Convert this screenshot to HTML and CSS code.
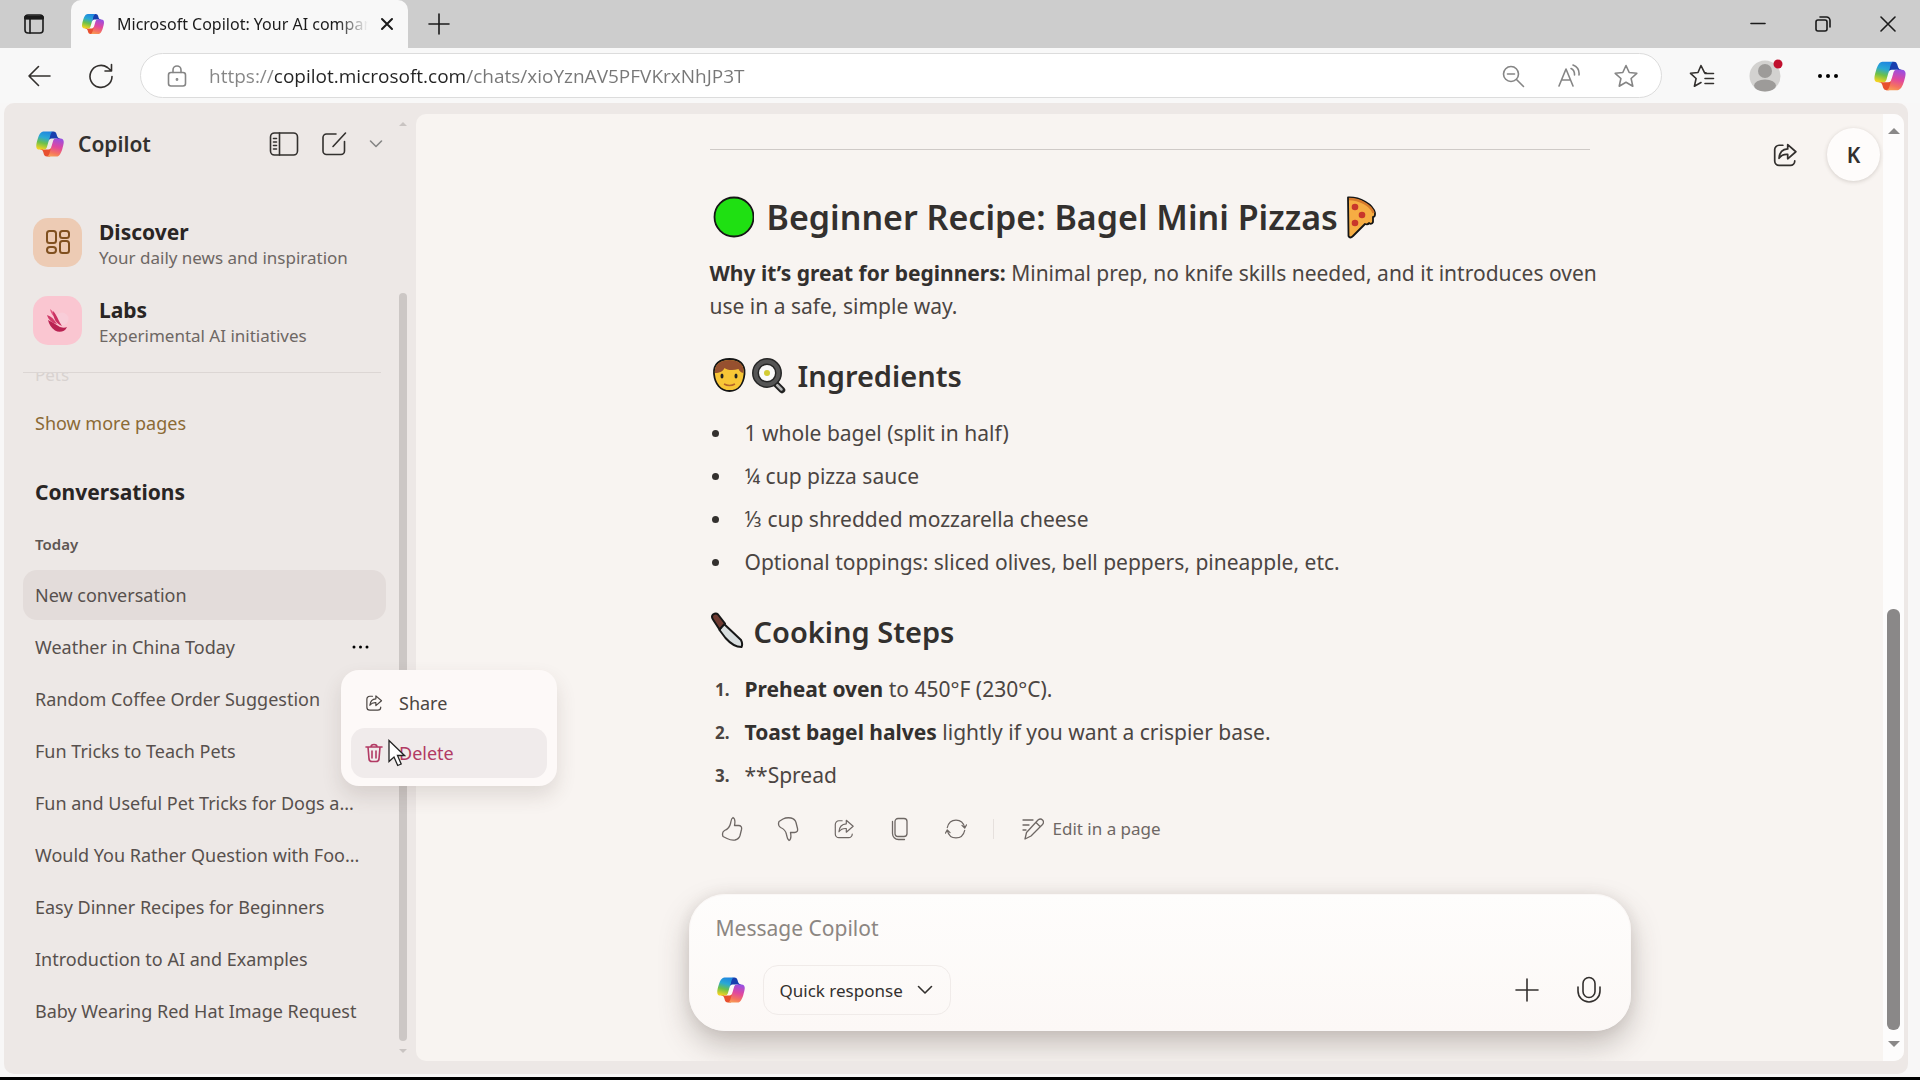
FILE: index.html
```html
<!DOCTYPE html>
<html lang="en">
<head>
<meta charset="utf-8">
<title>Microsoft Copilot: Your AI companion</title>
<link rel="stylesheet" href="styles.css">
</head>
<body>
<svg class="sprite" width="0" height="0" aria-hidden="true">
  <defs>
    <linearGradient id="cool" x1="0.6" y1="0" x2="0.35" y2="1">
      <stop offset="0" stop-color="#1f86e0"/><stop offset=".35" stop-color="#2aa9d4"/><stop offset=".65" stop-color="#6cc04a"/><stop offset="1" stop-color="#f3d321"/>
    </linearGradient>
    <linearGradient id="warm" x1="0.6" y1="0" x2="0.35" y2="1">
      <stop offset="0" stop-color="#9a4fe0"/><stop offset=".45" stop-color="#e0479f"/><stop offset=".8" stop-color="#f5735f"/><stop offset="1" stop-color="#f79a55"/>
    </linearGradient>
  </defs>
  <symbol id="copilot" viewBox="0 0 48 48">
    <path d="M34.142 7.325A4.630 4.630 0 0 0 29.700 4h-1.350a4.630 4.630 0 0 0-4.554 3.794L21.480 20.407l.575-1.965a4.630 4.630 0 0 1 4.444-3.329h7.853l3.294 1.282 3.175-1.282h-.926a4.630 4.630 0 0 1-4.443-3.325z" fill="#173fae"/>
    <path d="M14.330 40.656A4.630 4.630 0 0 0 18.779 44h2.870a4.630 4.630 0 0 0 4.629-4.510l.312-12.163-.654 2.233a4.630 4.630 0 0 1-4.443 3.329h-7.919l-2.823-1.532-3.057 1.532h.912a4.630 4.630 0 0 1 4.447 3.344z" fill="#e8502f"/>
    <path d="M29.500 4H13.460c-4.583 0-7.332 6.057-9.165 12.113C2.123 23.290-.720 32.885 7.503 32.885h6.926a4.630 4.630 0 0 0 4.460-3.358 2078 2078 0 0 1 4.971-17.156c.843-2.843 1.545-5.284 2.623-6.805C27.086 4.713 28.093 4 29.500 4" fill="url(#cool)"/>
    <path d="M18.498 44h16.040c4.582 0 7.332-6.058 9.165-12.115 2.171-7.177 5.013-16.775-3.208-16.775h-6.926a4.630 4.630 0 0 0-4.460 3.358 2084 2084 0 0 1-4.972 17.160c-.842 2.843-1.544 5.285-2.622 6.806-.604.852-1.611 1.566-3.017 1.566" fill="url(#warm)"/>
  </symbol>
  <symbol id="share" viewBox="0 0 24 24">
    <path d="M10 3H6.500A4 4 0 0 0 2.500 7v10.500a4 4 0 0 0 4 4H17a4 4 0 0 0 4-4M14.500 2.500l7.500 6.500-7.500 6.500v-4c-3.500-.3-6 .8-8 3.500.4-5 3-8.300 8-8.600z"/>
  </symbol>
</svg>

<header class="tabs">
  <button class="icon-btn workspaces" aria-label="Tab actions"><svg class="line" width="22" height="22" viewBox="0 0 22 22"><rect x="2" y="2" width="18" height="18" rx="3"/><path d="M2 5.500h18M7 5v15"/><path d="M3 4.500h16" stroke-width="4"/></svg></button>
  <div class="tab">
    <svg width="24" height="24"><use href="#copilot"/></svg>
    <span class="tab-title">Microsoft Copilot: Your AI companion</span>
    <button class="icon-btn" aria-label="Close tab"><svg class="line bold" width="14" height="14" viewBox="0 0 14 14"><path d="M2 2l10 10M12 2L2 12"/></svg></button>
  </div>
  <button class="icon-btn new-tab" aria-label="New tab"><svg class="line" width="22" height="22" viewBox="0 0 22 22"><path d="M11 1v20M1 11h20"/></svg></button>
  <div class="window-controls">
    <button class="icon-btn" aria-label="Minimize"><svg class="line" width="16" height="16" viewBox="0 0 16 16"><path d="M1 7.500h14"/></svg></button>
    <button class="icon-btn" aria-label="Restore"><svg class="line" width="16" height="16" viewBox="0 0 16 16"><rect x="1" y="4" width="11" height="11" rx="2"/><path d="M5 1h6.500A3.500 3.500 0 0 1 15 4.500V11"/></svg></button>
    <button class="icon-btn" aria-label="Close window"><svg class="line" width="16" height="16" viewBox="0 0 16 16"><path d="M1 1l14 14M15 1L1 15"/></svg></button>
  </div>
</header>

<div class="toolbar">
  <button class="icon-btn" aria-label="Back"><svg class="line" width="24" height="24" viewBox="0 0 24 24"><path d="M23 12H2M11.500 2.500L2 12l9.500 9.500"/></svg></button>
  <button class="icon-btn" aria-label="Refresh"><svg class="line" width="26" height="26" viewBox="0 0 26 26"><path d="M24 13.500A11 11 0 1 1 19.500 4.500l3.500 3M23.500 1.500v6.500H17"/></svg></button>
  <div class="address">
    <svg class="line grey" width="22" height="24" viewBox="0 0 22 24"><rect x="2.500" y="8.500" width="17" height="13.500" rx="2.500"/><path d="M7 8.500V6a4 4 0 0 1 8 0v2.500"/><circle cx="11" cy="15.500" r=".6"/></svg>
    <input class="url" type="text" aria-label="Address" value="https://copilot.microsoft.com/chats/xioYznAV5PFVKrxNhJP3T">
    <button class="icon-btn" aria-label="Zoom out"><svg class="line grey" width="24" height="24" viewBox="0 0 24 24"><circle cx="10" cy="10" r="7.500"/><path d="M6.500 10h7M15.500 15.500l7 7"/></svg></button>
    <button class="icon-btn" aria-label="Read aloud"><svg class="line grey" width="24" height="24" viewBox="0 0 24 24"><path d="M2 22L9 5l7 17M4.500 16h9M14 4.500c2.500 1.200 3.700 3.500 3.500 6.500M16 1c4.500 1.800 6.500 5.500 6 10"/></svg></button>
    <button class="icon-btn" aria-label="Add to favorites"><svg class="line grey" width="26" height="26" viewBox="0 0 26 26"><path d="M13 2.500l3.200 7 7.600.8-5.700 5.200 1.700 7.700L13 19.300l-6.800 3.900 1.700-7.700-5.700-5.200 7.600-.8z"/></svg></button>
  </div>
  <div class="browser-actions">
    <button class="icon-btn" aria-label="Favorites"><svg class="line" width="26" height="26" viewBox="0 0 26 26"><path d="M17 9.800l-1.500-.2L12 2.500 9 9.500l-7.500.8 5.600 5.200-1.700 7.700L12 19.500M16 10.500h8.500M16 15.500h8.500M16 20.500h8.500"/></svg></button>
    <button class="icon-btn profile" aria-label="Profile"><svg width="34" height="34" viewBox="0 0 34 34"><circle cx="16" cy="17" r="15.500" fill="#d3d2d0"/><circle cx="16" cy="12" r="7" fill="#9d9b99"/><ellipse cx="16" cy="26.500" rx="11" ry="6" fill="#9d9b99"/><circle cx="29" cy="5" r="4.500" fill="#c0102e"/></svg></button>
    <button class="icon-btn" aria-label="More"><svg width="22" height="6" viewBox="0 0 22 6"><circle cx="3" cy="3" r="2"/><circle cx="11" cy="3" r="2"/><circle cx="19" cy="3" r="2"/></svg></button>
    <button class="icon-btn" aria-label="Copilot"><svg width="34" height="34"><use href="#copilot"/></svg></button>
  </div>
</div>

<div class="app">
  <aside class="sidebar">
    <div class="side-body">
      <div class="brand">
        <svg width="30" height="30"><use href="#copilot"/></svg>
        <span class="brand-name">Copilot</span>
        <button class="icon-btn" aria-label="Toggle sidebar"><svg class="line" width="30" height="26" viewBox="0 0 30 26"><rect x="1.500" y="2" width="27" height="22" rx="4"/><path d="M10.500 2v22M4.500 7.500h3M4.500 11h3M4.500 14.500h3M4.500 18h3"/></svg></button>
        <button class="icon-btn" aria-label="New chat"><svg class="line" width="26" height="26" viewBox="0 0 26 26"><path d="M15 3H5.500A3.500 3.500 0 0 0 2 6.500V20a3.500 3.500 0 0 0 3.500 3.500H20a3.500 3.500 0 0 0 3.500-3.500v-9.500M12 15.500L24.500 2"/></svg></button>
        <button class="icon-btn" aria-label="More options"><svg class="line grey" width="14" height="10" viewBox="0 0 14 10"><path d="M1.500 2L7 7.500 12.500 2"/></svg></button>
      </div>
      <div class="features">
        <a class="feature" href="#discover">
          <span class="tile peach"><svg width="26" height="26" viewBox="0 0 26 26"><rect x="2" y="2" width="9" height="12" rx="2.500"/><rect x="15" y="2" width="9" height="7" rx="2.500"/><rect x="2" y="18" width="9" height="6" rx="3"/><rect x="15" y="12" width="9" height="12" rx="2.500"/></svg></span>
          <span class="feature-text"><strong>Discover</strong><span>Your daily news and inspiration</span></span>
        </a>
        <a class="feature" href="#labs">
          <span class="tile pink"><svg width="26" height="26" viewBox="0 0 26 26"><circle cx="17" cy="12" r="6.500" fill="#f8cdd8"/><path d="M5 2c3 2 5 6 6.500 10C8 9 5.500 6 5 2z" fill="#e0567f"/><path d="M2 8c4 1 7 4 10 9-5-1-8.500-4-10-9z" fill="#d03a68"/><path d="M3 13c5 2 8 5 12 7 3 1 5 1 7 0-2 5-8 6-12 3.500C6 21 4 17 3 13z" fill="#b92252"/><path d="M8 4c4 4 5 9 9 15-6-2-9-8-9-15z" fill="#c92f60"/></svg></span>
          <span class="feature-text"><strong>Labs</strong><span>Experimental AI initiatives</span></span>
        </a>
      </div>
      <div class="clipped"><span>Pets</span></div>
      <a class="more-pages" href="#pages">Show more pages</a>
      <h2 class="side-heading">Conversations</h2>
      <h3 class="side-day">Today</h3>
      <nav class="chats" aria-label="Conversations">
        <a class="chat active" href="#1">New conversation</a>
        <div class="chat hovered"><a href="#2">Weather in China Today</a><button class="icon-btn" aria-label="Conversation options"><svg width="18" height="4" viewBox="0 0 18 4"><circle cx="2" cy="2" r="1.500"/><circle cx="8.500" cy="2" r="1.500"/><circle cx="15" cy="2" r="1.500"/></svg></button></div>
        <a class="chat" href="#3">Random Coffee Order Suggestion</a>
        <a class="chat" href="#4">Fun Tricks to Teach Pets</a>
        <a class="chat" href="#5">Fun and Useful Pet Tricks for Dogs a...</a>
        <a class="chat" href="#6">Would You Rather Question with Foo...</a>
        <a class="chat" href="#7">Easy Dinner Recipes for Beginners</a>
        <a class="chat" href="#8">Introduction to AI and Examples</a>
        <a class="chat" href="#9">Baby Wearing Red Hat Image Request</a>
      </nav>
    </div>
    <div class="side-scroll"><span class="arrow-up"></span><span class="side-thumb"></span><span class="arrow-down"></span></div>
    <div class="menu" role="menu">
      <button class="menu-item" role="menuitem"><svg class="line" width="18" height="18"><use href="#share"/></svg>Share</button>
      <button class="menu-item danger" role="menuitem"><svg class="line" width="18" height="20" viewBox="0 0 18 20"><path d="M1 4h16M6 4a3 2.500 0 0 1 6 0M3 4l1 12a3 3 0 0 0 3 2.500h4a3 3 0 0 0 3-2.500l1-12M7 8v7M11 8v7"/></svg>Delete</button>
      <svg class="cursor" width="18" height="28" viewBox="0 0 18 28"><path d="M1 1.500v21l5-4.500 3.700 8.500 3.500-1.500-3.700-8.500h7z" fill="#fff" stroke="#222" stroke-width="1.300"/></svg>
    </div>
  </aside>

  <main class="panel">
    <div class="conversation">
      <article class="message">
        <hr>
        <h2><svg width="44" height="44" viewBox="0 0 44 44"><circle cx="24" cy="22" r="19.500" fill="#1fe012" stroke="#161616" stroke-width="1.800"/></svg><span>Beginner Recipe: Bagel Mini Pizzas</span><svg width="36" height="44" viewBox="0 0 36 44"><path d="M4 2.500C16 2 29 9 31 18q.3 4-2 4v5q-1.500 3-4 1-1 2-4 1L9 41q-3 3-4.500 0z" fill="#f6ad43" stroke="#161616" stroke-width="1.800" stroke-linejoin="round"/><path d="M5 4C15 4 27 10 29.500 18" fill="none" stroke="#d77a2c" stroke-width="2.500"/><circle cx="11" cy="12" r="3.300" fill="#c8362b"/><circle cx="18" cy="20" r="3.300" fill="#c8362b"/><circle cx="11" cy="28" r="3.300" fill="#c8362b"/></svg></h2>
        <p><strong>Why it’s great for beginners:</strong> Minimal prep, no knife skills needed, and it introduces oven use in a safe, simple way.</p>
        <h3><svg width="38" height="38" viewBox="0 0 38 38"><path d="M4 18C3 8 10 3 19.500 3s16 5 15 15-6 17-15 17S5 28 4 18z" fill="#f8c636" stroke="#161616" stroke-width="1.800"/><path d="M5 17C4 9 10 4 19.500 4s15 5 14 13c-3-.500-4-2-5-4-6 2-12 1-14-1-1 3-5 5-9.500 5z" fill="#96502f"/><ellipse cx="12" cy="20" rx="1.500" ry="2.500" fill="#222"/><ellipse cx="26" cy="20" rx="1.500" ry="2.500" fill="#222"/><path d="M14 28q5.500 3 11 0" fill="none" stroke="#b5652a" stroke-width="1.500"/></svg><svg width="38" height="38" viewBox="0 0 38 38"><path d="M25 27l7 7" stroke="#222" stroke-width="6.500" stroke-linecap="round"/><path d="M27 29l4.500 4.500" stroke="#b5b5b5" stroke-width="2.500" stroke-linecap="round"/><circle cx="17" cy="17" r="11.500" fill="#fafafa" stroke="#262626" stroke-width="7"/><circle cx="17" cy="17" r="11.500" fill="none" stroke="#555" stroke-width="4"/><circle cx="17" cy="17" r="3" fill="#d3cc35"/></svg><span>Ingredients</span></h3>
        <ul>
          <li>1 whole bagel (split in half)</li>
          <li>¼ cup pizza sauce</li>
          <li>⅓ cup shredded mozzarella cheese</li>
          <li>Optional toppings: sliced olives, bell peppers, pineapple, etc.</li>
        </ul>
        <h3 class="steps-title"><svg width="34" height="38" viewBox="0 0 34 38"><path d="M13 11L31 28q2 4 .5 7-8 0-16-9l-6-8z" fill="#d9dedf" stroke="#161616" stroke-width="2" stroke-linejoin="round"/><path d="M3 2.500q3-2 5 0l7 9-5.500 6L3 7.500q-2-3 0-5z" fill="#6f3b32" stroke="#161616" stroke-width="2" stroke-linejoin="round"/></svg><span>Cooking Steps</span></h3>
        <ol>
          <li><span><strong>Preheat oven</strong> to 450°F (230°C).</span></li>
          <li><span><strong>Toast bagel halves</strong> lightly if you want a crispier base.</span></li>
          <li><span>**Spread</span></li>
        </ol>
        <div class="actions">
          <button class="icon-btn" aria-label="Like"><svg class="line" width="22" height="26" viewBox="0 0 22 26"><path d="M12 1.500c2 1 2.500 3 1.500 8h4c2.500 0 3.500 1.500 3 4l-1.500 6q-1 3.500-5 4.500c-3 .5-6-.5-8-1.500L2 20.500q-1.500-4 1.500-6 5-2 6-7c.5-2 .5-5 2.500-6z"/></svg></button>
          <button class="icon-btn" aria-label="Dislike"><svg class="line" width="22" height="26" viewBox="0 0 22 26"><path d="M12 24.500c2-1 2.500-3 1.500-8h4c2.500 0 3.500-1.500 3-4L19 6.500Q18 3 14 2C11 1.500 8 2 6 3L2 5.500q-1.500 4 1.500 6 5 2 6 7c.5 2 .5 5 2.500 6z"/></svg></button>
          <button class="icon-btn" aria-label="Share"><svg class="line" width="22" height="22"><use href="#share"/></svg></button>
          <button class="icon-btn" aria-label="Copy"><svg class="line" width="22" height="24" viewBox="0 0 22 24"><rect x="6" y="1.500" width="12" height="18" rx="3"/><path d="M3.500 4.500v12a6 6 0 0 0 6 6h6"/></svg></button>
          <button class="icon-btn" aria-label="Regenerate"><svg class="line" width="22" height="24" viewBox="0 0 24 24"><path d="M2.500 10.500C5-.5 19-.5 21.500 10.500M18.500 8l3 3 2-3.500M21.500 13.500c-2.500 11-16.500 11-19 0M5.500 16l-3-3-2 3.500"/></svg></button>
          <span class="divider"></span>
          <button class="edit"><svg class="line" width="22" height="24" viewBox="0 0 22 24"><path d="M1 3h10M1 8h6M1 13h3M3 22l1.500-6.500L16 3q2.500-2 4.500 0t0 4.500L9 19zM14 5.500l4 4"/></svg>Edit in a page</button>
        </div>
      </article>
      <form class="composer">
        <input class="prompt" type="text" aria-label="Message Copilot" placeholder="Message Copilot">
        <div class="composer-row">
          <svg width="30" height="30"><use href="#copilot"/></svg>
          <button class="mode" type="button">Quick response<svg class="line" width="16" height="10" viewBox="0 0 16 10"><path d="M1.500 1.500L8 8l6.500-6.500"/></svg></button>
          <button class="icon-btn add" type="button" aria-label="Add"><svg class="line" width="24" height="24" viewBox="0 0 24 24"><path d="M12 1v22M1 12h22"/></svg></button>
          <button class="icon-btn" type="button" aria-label="Use microphone"><svg class="line" width="26" height="28" viewBox="0 0 26 28"><rect x="7" y="1.500" width="12" height="20" rx="6"/><path d="M2 11v4a11 11 0 0 0 22 0v-4"/></svg></button>
        </div>
      </form>
    </div>
    <div class="scrollbar"><span class="arrow-up"></span><span class="thumb"></span><span class="arrow-down"></span></div>
    <div class="account">
      <button class="icon-btn" aria-label="Share conversation"><svg class="line" width="26" height="26"><use href="#share"/></svg></button>
      <button class="avatar">K</button>
    </div>
  </main>
</div>
</body>
</html>
```

FILE: styles.css
```css
* { box-sizing: border-box; }

body {
  margin: 0;
  min-height: 100vh;
  display: flex;
  flex-direction: column;
  background: #f8f7f7;
  border-bottom: 3px solid #000;
  color: #33302e;
  font-family: "Noto Sans", "Liberation Sans", sans-serif;
}

.sprite { display: block; flex: none; height: 0; }
button, input { font: inherit; color: inherit; }
button { padding: 0; border: 0; background: none; }
a { color: inherit; text-decoration: none; }
svg { display: block; flex: none; }
h2, h3, p, ul, ol { margin: 0; padding: 0; }

.icon-btn { display: flex; align-items: center; justify-content: center; flex: none; }
.line { fill: none; stroke: currentColor; stroke-width: 1.6; stroke-linecap: round; stroke-linejoin: round; }
.line.bold { stroke-width: 2; }
.line.grey { color: #858585; }

/* Browser tab strip */
.tabs { display: flex; height: 48px; background: #cdcdcd; color: #1b1b1b; }
.workspaces { width: 71px; padding-right: 4px; }
.tab {
  display: flex;
  align-items: center;
  gap: 12px;
  width: 337px;
  padding: 0 14px 0 10px;
  border-radius: 10px 10px 0 0;
  background: #f8f8f8;
}
.tab-title {
  flex: 1;
  overflow: hidden;
  white-space: nowrap;
  font-size: 16px;
  mask-image: linear-gradient(90deg, #000 88%, transparent);
}
.new-tab { width: 62px; }
.window-controls { display: flex; margin-left: auto; }
.window-controls .icon-btn { width: 65px; }

/* Address row */
.toolbar { display: flex; align-items: center; height: 55px; padding: 0 13px 0 26px; background: #f8f8f8; }
.toolbar > .icon-btn { width: 26px; margin-right: 36px; }
.address {
  flex: 1;
  display: flex;
  align-items: center;
  gap: 32px;
  height: 45px;
  margin-left: -10px;
  padding: 0 22px 0 25px;
  border: 1px solid #dcdcdc;
  border-radius: 23px;
  background: #fff;
}
.url {
  flex: 1;
  min-width: 0;
  margin-left: -11px;
  padding: 0;
  border: 0;
  outline: 0;
  font-family: "Open Sans", "Noto Sans", sans-serif;
  font-size: 19px;
  color: transparent;
  background: linear-gradient(90deg, #858585 66px, #222 66px 258px, #777 258px) text;
}
.browser-actions { display: flex; align-items: center; gap: 34px; margin-left: 27px; }

/* Page shell */
.app {
  flex: 1;
  display: flex;
  margin: 0 12px 3px 4px;
  padding: 11px 4px 13px 0;
  border-radius: 10px;
  background: #ede8e6;
}

/* Sidebar */
.sidebar { position: relative; display: flex; width: 412px; flex: none; }
.side-body { flex: 1; padding: 0 4px 0 19px; }
.brand { display: flex; align-items: center; height: 60px; padding: 0 3px 0 12px; }
.brand-name { flex: 1; margin-left: 13px; font-size: 21px; font-weight: 600; }
.brand .icon-btn { margin-right: 22px; }
.brand .icon-btn:last-child { margin-right: 0; }
.features { display: flex; flex-direction: column; gap: 28px; margin-top: 43px; padding-left: 10px; }
.feature { display: flex; align-items: center; gap: 17px; height: 50px; }
.tile { display: grid; place-items: center; width: 49px; height: 49px; border-radius: 15px; }
.tile.peach { background: #edcbb4; }
.tile.peach svg { fill: none; stroke: #80501f; stroke-width: 2; }
.tile.pink { background: #fac6d1; }
.feature-text { display: flex; flex-direction: column; padding-top: 6px; font-size: 17px; line-height: 26px; color: #6e6764; }
.feature-text strong { font-size: 21px; font-weight: 700; color: #292524; }
.clipped {
  display: flex;
  align-items: flex-end;
  height: 11px;
  margin: 27px 5px 0 0;
  padding-left: 12px;
  overflow: hidden;
  border-top: 1px solid #dcd6d4;
  font-size: 17px;
  line-height: 17px;
  color: #d8d2d0;
}
.more-pages { display: block; margin-top: 27px; padding-left: 12px; font-size: 18px; line-height: 26px; color: #8b6a35; }
.side-heading { margin-top: 42px; padding-left: 12px; font-size: 21px; font-weight: 700; line-height: 28px; color: #292524; }
.side-day { margin-top: 28px; padding-left: 12px; font-size: 15px; font-weight: 600; line-height: 20px; color: #5d5653; }
.chats { margin-top: 16px; }
.chat {
  display: flex;
  align-items: center;
  justify-content: space-between;
  height: 50px;
  margin-bottom: 2px;
  padding: 0 16px 0 12px;
  border-radius: 14px;
  white-space: nowrap;
  font-size: 18px;
  color: #57504d;
}
.chat.active { background: #e3dcda; }
.side-scroll { display: flex; flex-direction: column; align-items: center; width: 26px; padding: 8px 0 8px; color: #c9c4c2; }
.side-thumb { flex: 1; width: 8px; margin: 167px 0 8px; border-radius: 4px; background: #ccc7c5; }
.side-scroll .arrow-up, .side-scroll .arrow-down { border-width: 4px; }

.arrow-up, .arrow-down { border: 6px solid transparent; }
.arrow-up { border-top: 0 !important; border-bottom-color: currentColor; }
.arrow-down { border-bottom: 0 !important; border-top-color: currentColor; }

.menu {
  position: absolute;
  z-index: 2;
  top: 556px;
  left: 337px;
  width: 216px;
  padding: 8px 10px;
  border-radius: 18px;
  background: #fdf9f8;
  box-shadow: 0 10px 20px rgba(80, 60, 50, .14);
}
.menu-item { display: flex; align-items: center; gap: 16px; width: 100%; height: 50px; padding: 0 14px; border-radius: 14px; font-size: 18px; color: #4b4542; }
.menu-item.danger { background: #f0ebeb; color: #b23a64; }
.cursor { position: absolute; top: 69px; left: 47px; }

/* Chat panel */
.panel { position: relative; flex: 1; display: flex; overflow: hidden; border-radius: 10px; background: #f8f4f1; }
.conversation { flex: 1; display: flex; flex-direction: column; }
.message { width: 100%; max-width: 880px; margin: 0 auto; padding-top: 35px; font-size: 21px; line-height: 33px; color: #4b4542; }
.message hr { height: 1px; margin: 0 0 45px; border: 0; background: #cfcac7; }
.message p { margin-right: -16px; }
.message h2, .message h3 { display: flex; align-items: center; color: #33302e; font-weight: 600; }
.message h2 { height: 44px; margin-bottom: 18px; font-size: 34px; }
.message h2 span { margin: 0 6px 0 13px; }
.message h3 { gap: 2px; height: 36px; margin: 34px 0 24px; font-size: 29px; }
.message h3 span { margin-left: 8px; }
.message strong { font-weight: 700; color: #33302e; }
.message ul, .message ol { display: flex; flex-direction: column; gap: 10px; list-style: none; }
.message li { display: grid; grid-template-columns: 20px 1fr; column-gap: 15px; align-items: center; }
.message ul li::before { content: ""; width: 7px; height: 7px; margin-left: 2px; border-radius: 50%; background: #33302e; }
.message ol { counter-reset: step; }
.message ol li { counter-increment: step; }
.message ol li::before { content: counter(step) "."; justify-self: end; font-size: 17px; font-weight: 700; color: #4b4542; }

.actions { display: flex; align-items: center; height: 26px; margin-top: 24px; padding-left: 11px; color: #6e6764; }
.actions .line { stroke-width: 1.3; }
.actions .icon-btn { margin-right: 34px; }
.actions .divider { width: 1px; height: 20px; margin: 0 28px 0 -8px; background: #e6e0dd; }
.edit { display: flex; align-items: center; gap: 9px; font-size: 17px; line-height: 26px; }

.composer {
  width: 942px;
  max-width: 96%;
  margin: auto auto 30px;
  position: relative;
  left: 10px;
  padding: 18px 26px 15px;
  border: 1px solid #fbf8f7;
  border-radius: 36px;
  background: linear-gradient(#fefdfc, #fcf8f6);
  box-shadow: 0 14px 30px rgba(70, 55, 45, .28), 0 0 14px rgba(70, 55, 45, .08);
}
.prompt { display: block; width: 100%; height: 30px; padding: 0; border: 0; outline: 0; background: none; font-size: 21px; }
.prompt::placeholder { color: #8c8682; opacity: 1; }
.composer-row { display: flex; align-items: center; margin-top: 22px; }
.mode {
  display: flex;
  align-items: center;
  justify-content: space-between;
  width: 188px;
  height: 50px;
  margin-left: 17px;
  padding: 0 17px 0 16px;
  border: 1px solid #f0ebe9;
  border-radius: 15px;
  font-size: 17px;
}
.add { margin: 0 37px 0 auto; }
.composer-row > .icon-btn:last-child { margin-right: 2px; }

.scrollbar { display: flex; flex-direction: column; align-items: center; width: 21px; padding: 14px 0; background: #fdfcfc; color: #8a8888; }
.thumb { flex: 1; width: 13px; margin: 475px 0 11px; border-radius: 6px; background: #8a8888; }

.account { position: absolute; top: 14px; right: 24px; display: flex; align-items: center; gap: 29px; }
.avatar { width: 53px; height: 53px; border-radius: 50%; background: #fefcfb; box-shadow: 0 1px 4px rgba(70, 55, 45, .2); font-size: 21px; font-weight: 600; }
```
